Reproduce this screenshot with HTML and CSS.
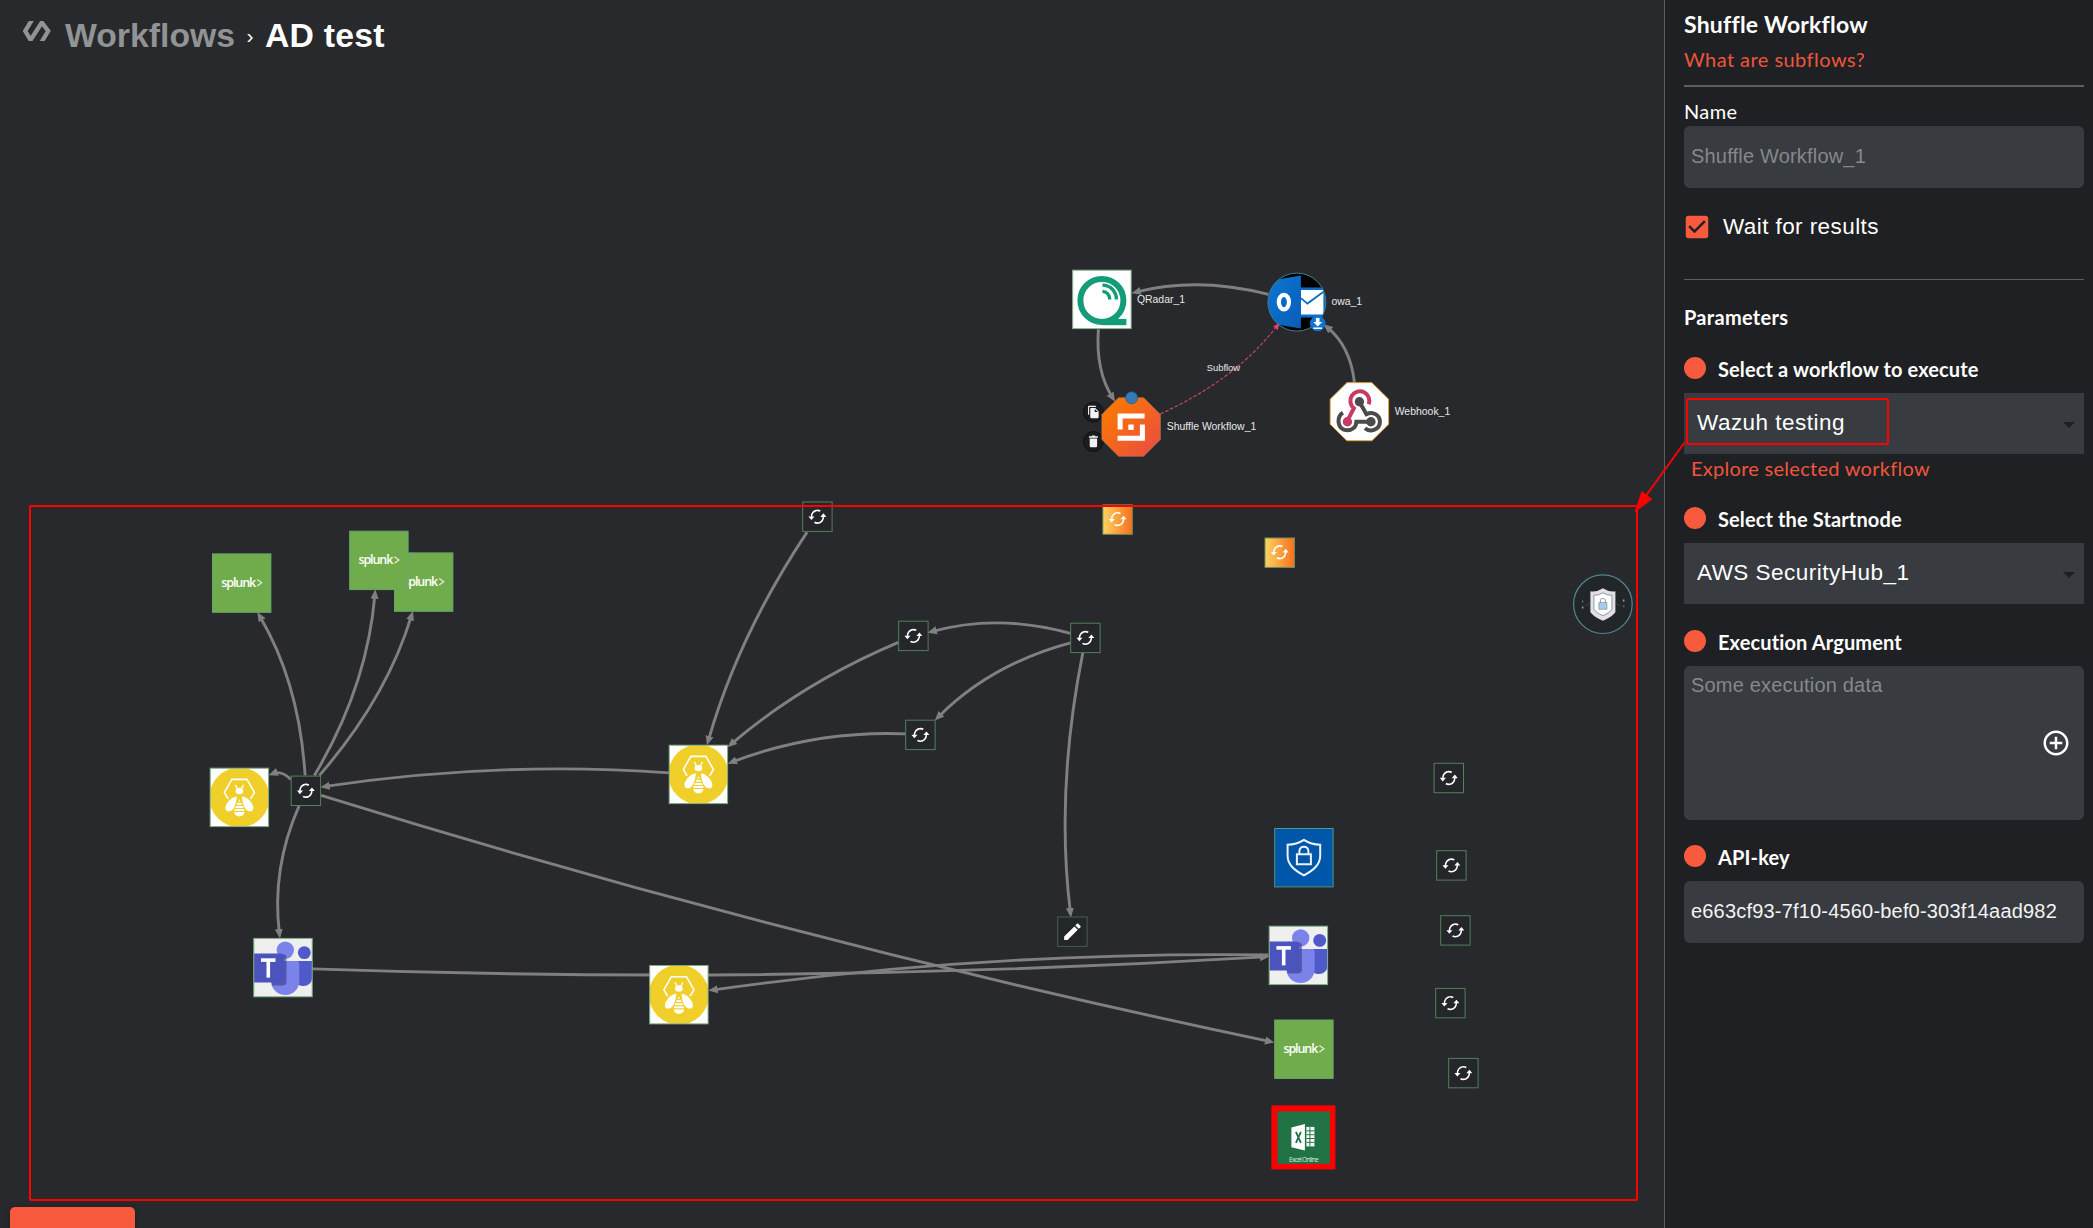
FILE: index.html
```html
<!DOCTYPE html>
<html lang="en">
<head>
<meta charset="utf-8">
<title>AD test</title>
<link rel="stylesheet" href="styles.css">
</head>
<body>
<main class="canvas">
  <header class="crumbs">
    <svg class="logo" width="30" height="20" viewBox="0 0 30 20"><path d="M10.5 -2 3.2 10 8.6 19 19.8 1.5 26.2 10 19 22" fill="none" stroke="#929394" stroke-width="4.300"/></svg>
    <span class="crumb-parent">Workflows</span>
    <span class="crumb-sep">›</span>
    <span class="crumb-current">AD test</span>
  </header>

  <svg class="graph" width="1664" height="1228" viewBox="-.4 -.4 1664 1228">
    <defs>
      <marker id="arrow" viewBox="0 0 8 8" refX="3.7" refY="4" markerWidth="9.500" markerHeight="9.500" markerUnits="userSpaceOnUse" orient="auto"><path d="M0 .6 8 4 0 7.4z" fill="#808080"/></marker>
      <marker id="arrow-sub" viewBox="0 0 8 8" refX="6" refY="4" markerWidth="6.500" markerHeight="6.500" markerUnits="userSpaceOnUse" orient="auto"><path d="M0 .4 8 4 0 7.6z" fill="#e83e72"/></marker>
      <linearGradient id="sub" x1="0" y1="1" x2="1" y2="0"><stop offset="0" stop-color="#c9564a"/><stop offset="1" stop-color="#d83a6e"/></linearGradient>
      <linearGradient id="orange" x1="0" y1="0" x2="1" y2="0"><stop offset="0" stop-color="#fcd360"/><stop offset="1" stop-color="#f8701d"/></linearGradient>
      <linearGradient id="shuffle" x1="0" y1="0" x2="1" y2="1"><stop offset=".15" stop-color="#fb7705"/><stop offset="1" stop-color="#e74a45"/></linearGradient>
      <linearGradient id="owa-blue" x1="0" y1="0" x2="1" y2="1"><stop offset="0" stop-color="#0a78d3"/><stop offset="1" stop-color="#0a5cb8"/></linearGradient>
      <clipPath id="round"><circle r="29"/></clipPath>
      <clipPath id="tile"><rect x="-29" y="-29" width="58" height="58"/></clipPath>

      <g id="cycle" fill="#fff"><g transform="scale(.83 .9) translate(-12 -12)"><path d="M19.3 8.2l-3.8 4h2.7c0 3.2-2.9 5.9-6.2 5.9-1.01 0-1.97-.25-2.8-.7l-1.3 1.5C9.1 19.6 10.43 20 12 20c4.42 0 8-3.58 8-7.8h2.8zM5.8 11.8c0-3.2 2.9-5.9 6.2-5.9 1.01 0 1.97.25 2.8.7l1.3-1.5C14.9 4.4 13.57 4 12 4c-4.42 0-8 3.58-8 7.8H1.2l3.5 4 3.8-4z"/></g></g>
      <g id="repeat"><rect x="-14.7" y="-14.7" width="29.4" height="29.4" fill="#242629" stroke="#54805a"/><use href="#cycle"/></g>
      <g id="repeat-orange"><rect x="-14.7" y="-14.7" width="29.4" height="29.4" fill="url(#orange)" stroke="#6f8f58"/><use href="#cycle" y="-.5"/></g>
      <g id="splunk"><rect x="-29.2" y="-29.2" width="58.4" height="58.4" fill="#70ac4c" stroke="#67a869"/><text class="splunk" x="-20.5" y="3.6" textLength="35">splunk</text><path d="M15.5 -3.6 20 -.4 15.5 2.8" fill="none" stroke="#e4efdc" stroke-width="1.2"/></g>
      <g id="bee">
        <rect x="-29.2" y="-29.2" width="58.4" height="58.4" fill="#fff"/>
        <circle r="30" fill="#f1cf2b" clip-path="url(#tile)"/>
        <rect x="-29.2" y="-29.2" width="58.4" height="58.4" fill="none" stroke="#7bab80"/>
        <path d="M-11.3 1.5-15-5-7.5-18H7.5L15-5 11.3 1.5" fill="none" stroke="#fff" stroke-width="1.6"/>
        <path d="M-4-12.5-2-8.5M4-12.5 2-8.5" stroke="#fff" stroke-width="1.3"/>
        <ellipse cy="-6.3" rx="3.8" ry="3.2" fill="#fff"/>
        <path d="M-2.5-1C-8-1-14 6-14 10.500-14 13.500-11.500 14.600-9 13.500-5 12-3.500 7-2.500-1zM2.500-1C8-1 14 6 14 10.500 14 13.500 11.500 14.600 9 13.500 5 12 3.500 7 2.500-1z" fill="#fff"/>
        <path d="M0 1.500 1 4H-1zM-2 5.300H2L2.600 7.300H-2.600zM-3.600 8.500H3.600L4.300 10.500H-4.300zM-4.800 11.700H4.800L5.100 13.500H-5.100zM-5.100 14.700H5.100C5 17.500 2.500 19-0 19S-5 17.500-5.100 14.700z" fill="#fff"/>
      </g>
      <g id="teams">
        <rect x="-29.2" y="-29.2" width="58.4" height="58.4" fill="#efefef"/>
        <circle cx="21.300" cy="-15" r="6.400" fill="#5059c9"/>
        <path d="M12-6.500H29V11C29 15 25 18.500 20.500 18.500 17 18.500 13 17 12 14z" fill="#5059c9"/>
        <circle cx="2.300" cy="-17.500" r="8.700" fill="#7b83eb"/>
        <path d="M-12-6.500H14Q16.300-6.500 16.300-4V13.500C16.300 21.500 10 27.500 2.300 27.500S-12 21.500-12 13.500z" fill="#7b83eb"/>
        <path d="M-13-13.500H0Q3.500-13 3.500-10V14Q3.500 18-.5 18H-11z" fill="#3b3f8a" opacity=".65"/>
        <path d="M-29-14H-2.500Q1-14 1-10.500V11.500Q1 15-2.500 15H-29z" fill="#4b53bc"/>
        <path d="M-22-7.500H-7.500" stroke="#fff" stroke-width="3.600"/><path d="M-14.700-7V10" stroke="#fff" stroke-width="3.600"/>
        <rect x="-29.2" y="-29.2" width="58.4" height="58.4" fill="none" stroke="#7bb07f"/>
      </g>
    </defs>

    <g class="edges">
      <path d="M1268 294Q1198 276 1136 291.500"/>
      <path d="M1098 329Q1095 370 1112 397"/>
      <path d="M1354 382Q1350 346 1327 327"/>
      <path d="M304.700 775Q299 683 259.500 616"/>
      <path d="M314 775Q367 686 374.500 594"/>
      <path d="M319 775Q386 698 411 615.500"/>
      <path d="M290.500 779Q281 770 273 773"/>
      <path d="M298.700 805.500Q271 868 279 933"/>
      <path d="M320.700 795Q792 941 1269 1041"/>
      <path d="M668.500 772.500Q500 760 325 786"/>
      <path d="M806.700 531.700Q738 635 708 740"/>
      <path d="M898 642Q803 682 731 743.500"/>
      <path d="M905 733.500Q815 730 732 761.500"/>
      <path d="M1070 633Q998 613 932 631"/>
      <path d="M1070 642.500Q990 664 938 716.500"/>
      <path d="M1082.400 652.500Q1055 790 1070 912"/>
      <path d="M312 968.500Q790 985 1264 956.500"/>
      <path d="M1268 954.500Q985 951 713 989.500"/>
    </g>
    <path d="M1160 413.500Q1236 379 1278 324" class="subflow-edge"/>

    <g class="tags">
      <text x="1136.500" y="302.300">QRadar_1</text>
      <text x="1331" y="305">owa_1</text>
      <text x="1394.300" y="414.500">Webhook_1</text>
      <text x="1166.300" y="429.700">Shuffle Workflow_1</text>
      <text class="tag-small" x="1206.300" y="370.300">Subflow</text>
    </g>

    <!-- QRadar -->
    <g transform="translate(1101.500 299)">
      <rect x="-29.200" y="-29.200" width="58.400" height="58.400" fill="#fff" stroke="#8fb58f"/>
      <path d="M0 19.500H24.500V25.800H0z" fill="#139c77"/>
      <circle cy="1" r="21.500" fill="#fff" stroke="#139c77" stroke-width="6"/>
      <path d="M.5-14.300C8.500-14.300 14.500-8 14.500 0M.5-8C4.500-8 7.800-4.500 7.800 0" fill="none" stroke="#139c77" stroke-width="3.400"/>
    </g>

    <!-- Outlook -->
    <g transform="translate(1296.500 301.700)">
      <g clip-path="url(#round)">
        <circle r="29" fill="#000"/>
        <path d="M3-14.500H29V15.500H3z" fill="#0a6cc8"/>
        <path d="M4-12H26.500V12.500H4z" fill="#fff"/>
        <path d="M4-4 10.500 1.500 27-10.500" fill="none" stroke="#0a6cc8" stroke-width="1.800"/>
        <path d="M-29-21 4-26.500V26.500L-29 21z" fill="url(#owa-blue)"/>
        <ellipse cx="-13" cy="0" rx="5.100" ry="7.300" fill="none" stroke="#fff" stroke-width="4.200"/>
      </g>
      <circle r="29" fill="none" stroke="#3f7f8c"/>
      <circle cx="20.800" cy="21.300" r="7.800" fill="#1173cf"/>
      <path d="M19 16H22.600V20H25.300L20.800 24.500 16.300 20H19zM16.500 25.500H25.100V27H16.500z" fill="#fff"/>
    </g>

    <!-- Webhook -->
    <g transform="translate(1359 411.300)">
      <path d="M-12.500-29H12.500L29.200-12.500V12.500L12.500 29H-12.500L-29.200 12.500V-12.500z" fill="#fff" stroke="#e8a33a"/>
      <g fill="none" stroke-width="4">
        <path d="M9.300-7.500A9.500 9.500 0 1 0-5.500-3.500L-12 9" stroke="#c73a63"/>
        <path d="M0-10 7 2.500C14-1 20.500 4 20.500 10 20.500 18 11 21 5.500 16.500" stroke="#4b4b4b"/>
        <path d="M-16.500 1C-23 5-22 15-15.500 18-8 20.500-3 15-3 10H11" stroke="#4b4b4b"/>
      </g>
      <circle cy="-10" r="4.700" fill="#4b4b4b"/><circle cx="-12" cy="10" r="4.700" fill="#c73a63"/><circle cx="11.500" cy="10" r="4.700" fill="#4b4b4b"/>
    </g>

    <!-- Shuffle workflow with its node controls -->
    <g transform="translate(1130.700 426.600)">
      <g transform="translate(-37.700 -14.900)"><circle r="10" fill="#1b1c1f" stroke="#101113"/><g transform="translate(-6.500 -6.800) scale(.56)" fill="#f2f2f2"><path d="M16 1H4c-1.100 0-2 .9-2 2v14h2V3h12V1zm-1 4l6 6v10c0 1.100-.9 2-2 2H7.990C6.890 23 6 22.100 6 21l.01-14c0-1.100.89-2 1.990-2h7zm-1 7h5.500L14 6.500V12z"/></g></g>
      <g transform="translate(-37.700 14.600)"><circle r="10" fill="#1b1c1f" stroke="#101113"/><path d="M-3.700-3H3.700V4.500Q3.700 5.700 2.500 5.700H-2.500Q-3.700 5.700-3.700 4.500zM-4.500-5.300H-2L-1.300-6H1.300L2-5.300H4.500V-3.900H-4.500z" fill="#f2f2f2"/></g>
      <path d="M-12.500-29.200H12.500L29.200-12.500V12.500L12.500 29.200H-12.500L-29.200 12.500V-12.500z" fill="url(#shuffle)" stroke="#b77a55" stroke-width=".7"/>
      <path d="M13.500-11H-11V2.500M11.300-2.500V11.200H-13.500" fill="none" stroke="#fff" stroke-width="5"/>
      <rect x="-2.800" y="-2.500" width="5.400" height="5.400" fill="#fff"/>
      <circle cx=".5" cy="-29.200" r="6" fill="#337ab7" stroke="#1d5f93" stroke-width=".8"/>
    </g>

    <!-- Subflow nodes -->
    <use href="#splunk" x="241.300" y="582.700"/>
    <use href="#splunk" x="423.300" y="581.700"/>
    <use href="#splunk" x="378.500" y="560"/>
    <use href="#splunk" x="1303.500" y="1048.800"/>
    <use href="#bee" x="239" y="797"/>
    <use href="#bee" x="698" y="774"/>
    <use href="#bee" x="678.500" y="994.300"/>
    <use href="#teams" x="282.600" y="967.200"/>
    <use href="#teams" x="1298" y="955"/>
    <use href="#repeat" x="305.500" y="790.400"/>
    <use href="#repeat" x="817" y="516.300"/>
    <use href="#repeat" x="913" y="635.500"/>
    <use href="#repeat" x="1085" y="637.500"/>
    <use href="#repeat" x="920" y="734.500"/>
    <use href="#repeat" x="1448.400" y="777.600"/>
    <use href="#repeat" x="1451" y="865"/>
    <use href="#repeat" x="1455" y="930"/>
    <use href="#repeat" x="1450" y="1002.700"/>
    <use href="#repeat" x="1463" y="1072.700"/>
    <use href="#repeat-orange" x="1117.200" y="519.200"/>
    <use href="#repeat-orange" x="1279.300" y="552.300"/>

    <!-- Edit tool -->
    <g transform="translate(1072 931.300)">
      <rect x="-14.700" y="-14.700" width="29.400" height="29.400" fill="#242629" stroke="#42604a"/>
      <g transform="translate(-11 -11) scale(.92)" fill="#fff"><path d="M3 17.250V21h3.750L17.810 9.940l-3.750-3.750L3 17.250zM20.710 7.040c.39-.39.39-1.020 0-1.410l-2.340-2.340c-.39-.39-1.020-.39-1.410 0l-1.830 1.830 3.750 3.750 1.830-1.830z"/></g>
    </g>

    <!-- Defender -->
    <g transform="translate(1303.500 857.300)">
      <rect x="-29.200" y="-29.200" width="58.400" height="58.400" fill="#0056a8" stroke="#4f9a80"/>
      <path d="M-16.300-13C-10-13-5-14.500 0-17.800 5-14.500 10-13 16.300-13V-2C16.300 7 9.500 12.500 0 17.700-9.500 12.500-16.300 7-16.300-2z" fill="none" stroke="#edf2f7" stroke-width="2"/>
      <path d="M-7-3.500H7V6.500H-7zM-4.500-3.500V-6.500C-4.500-12.500 4.500-12.500 4.500-6.500V-3.500" fill="none" stroke="#edf2f7" stroke-width="2"/>
    </g>

    <!-- Security hub -->
    <g transform="translate(1602.500 603.800)">
      <circle r="29.300" fill="#232629" stroke="#4f8790" stroke-width="1.200"/>
      <path d="M-12.500-13Q-6-12 0-16 6-12 12.500-13V8Q8 13.500 0 16.500-8 13.500-12.500 8z" fill="#dfe1e6"/>
      <path d="M-9-9Q-4-8.500 0-11.500 4-8.500 9-9V5.500Q6 9 0 11.500-6 9-9 5.500z" fill="#fff" stroke="#8b8d92" stroke-width=".9"/>
      <rect x="-4" y="-1.500" width="8" height="6.500" fill="#a5cdf0" stroke="#7d92a5" stroke-width=".7"/>
      <path d="M-2.500-1.500V-3.500C-2.500-6.500 2.500-6.500 2.500-3.500V-1.500" fill="none" stroke="#85909c" stroke-width="1"/>
      <path d="M-21-2.700H-19.500M20 2H21.500" stroke="#5365a0" stroke-width="2"/><path d="M-21 3.300H-19.500M20-3.800H21.500" stroke="#a0a0a2" stroke-width="2"/>
      <path d="M-18 1H-15L-13-2M18 1H15L13-2" fill="none" stroke="#3c3e42"/>
    </g>

    <!-- Excel -->
    <g transform="translate(1303 1137)">
      <rect x="-32" y="-32" width="64" height="64" fill="#f00"/>
      <rect x="-26" y="-26" width="52.500" height="52.500" fill="#217346"/>
      <path d="M3-10.500H11V9H3z" fill="#fff"/>
      <path d="M3-6.500H11M3-2.700H11M3 1.100H11M3 4.900H11M6.500-10.500V9" stroke="#217346" stroke-width="1"/>
      <path d="M-12-10 1.500-13.500V13L-12 9.800z" fill="#fff"/>
      <path d="M-7.500-5.500-2.500 5.500M-2.500-5.500-7.500 5.500" stroke="#217346" stroke-width="1.800"/>
      <text class="excel" x="-14.300" y="24.300" textLength="29.500">Excel Online</text>
    </g>
  </svg>

  <button class="action" aria-label="Run"></button>
</main>

<aside class="panel">
  <h1 class="title">Shuffle Workflow</h1>
  <a class="link help">What are subflows?</a>
  <hr class="rule rule-thick">
  <div class="label">Name</div>
  <div class="field muted">Shuffle Workflow_1</div>
  <div class="check">
    <svg width="30" height="30" viewBox="0 0 24 24"><path fill="#f85a3e" d="M19 3H5c-1.110 0-2 .9-2 2v14c0 1.100.89 2 2 2h14c1.110 0 2-.9 2-2V5c0-1.100-.89-2-2-2zm-9 14l-5-5 1.410-1.410L10 14.170l7.590-7.590L19 8l-9 9z"/></svg>
    <span>Wait for results</span>
  </div>
  <hr class="rule">
  <h2 class="section">Parameters</h2>

  <div class="param"><i class="dot"></i><b>Select a workflow to execute</b></div>
  <div class="select">Wazuh testing<i class="caret"></i></div>
  <a class="link explore">Explore selected workflow</a>

  <div class="param"><i class="dot"></i><b>Select the Startnode</b></div>
  <div class="select">AWS SecurityHub_1<i class="caret"></i></div>

  <div class="param param-arg"><i class="dot"></i><b>Execution Argument</b></div>
  <div class="field area muted">
    <span>Some execution data</span>
    <svg width="30" height="30" viewBox="0 0 24 24"><path fill="#fff" d="M13 7h-2v4H7v2h4v4h2v-4h4v-2h-4V7zm-1-5C6.480 2 2 6.480 2 12s4.480 10 10 10 10-4.480 10-10S17.520 2 12 2zm0 18c-4.410 0-8-3.590-8-8s3.590-8 8-8 8 3.590 8 8-3.590 8-8 8z"/></svg>
  </div>

  <div class="param param-key"><i class="dot"></i><b>API-key</b></div>
  <div class="field key">e663cf93-7f10-4560-bef0-303f14aad982</div>
</aside>

<svg class="annotations" width="2093" height="1228" viewBox="0 0 2093 1228">
  <g fill="none" stroke="#f00" stroke-width="2">
    <rect x="30" y="506" width="1607" height="694" rx="1"/>
    <rect x="1687" y="399" width="201" height="45" rx="1"/>
    <path d="M1684.500 442.500 1645 497"/>
  </g>
  <path d="M1634.500 512.500 1641.500 491 1652.300 499.300z" fill="#f00"/>
</svg>
</body>
</html>
```
FILE: styles.css
```css
* { box-sizing: border-box; }

body {
  margin: 0;
  display: flex;
  width: 2093px;
  height: 1228px;
  overflow: hidden;
  position: relative;
  background: #27292d;
  color: #fff;
  font-family: "Liberation Sans", Arial, sans-serif;
}

/* Workflow canvas */
.canvas {
  position: relative;
  flex: 1;
  height: 1228px;
  overflow: hidden;
}

.crumbs {
  display: flex;
  align-items: baseline;
  padding: 15px 0 0 22px;
  height: 60px;
  font-size: 33.750px;
  line-height: 40px;
  font-weight: 700;
  white-space: nowrap;
}
.logo { align-self: flex-start; margin-top: 6px; }
.crumb-parent { margin-left: 13px; color: #929394; }
.crumb-sep { position: relative; top: -4px; width: 30px; text-align: center; font-size: 21px; font-weight: 400; }
.crumb-current { letter-spacing: .2px; }

.graph { position: absolute; left: 0; top: 0; }
.edges path { fill: none; stroke: #808080; stroke-width: 2.900; marker-end: url(#arrow); }
.subflow-edge { fill: none; stroke: url(#sub); stroke-width: 1.100; stroke-dasharray: 3.500 1.800; marker-end: url(#arrow-sub); }
.tags text { font-size: 10.450px; fill: #e8e8e8; }
.tags .tag-small { font-size: 9.400px; }
.splunk { font: 600 12.500px "Open Sans", sans-serif; fill: #fff; }
.excel { font: 6.500px "Open Sans", sans-serif; fill: #dfeae3; }

.action {
  position: absolute;
  left: 10px;
  top: 1207px;
  width: 125px;
  height: 46px;
  border: 0;
  border-radius: 5px;
  background: #f85a3e;
  box-shadow: 0 1px 6px rgba(0, 0, 0, .25);
}

/* Side panel */
.panel {
  width: 429px;
  display: flex;
  flex-direction: column;
  padding: 0 9px 0 19px;
  border-left: 1px solid #5c5f62;
  background: #1f2023;
  white-space: nowrap;
}
.title, .link, .label, .section, .param b { font-family: Lato, sans-serif; margin: 0; }
.title { height: 47px; padding-top: 8px; font-size: 23px; line-height: 32px; font-weight: 700; letter-spacing: .2px; }
.link { color: #ef553b; font-size: 20px; line-height: 24px; }
.help { height: 38px; letter-spacing: .45px; }
.rule { flex: none; width: 100%; height: 1px; margin: 0; border: 0; background: #5c6063; }
.rule-thick { height: 2px; }
.label { height: 39px; padding-top: 12px; font-size: 20px; line-height: 24px; letter-spacing: .4px; }
.field {
  flex: none;
  height: 62px;
  padding-left: 7px;
  border-radius: 6px;
  background: #383b40;
  font-size: 20px;
  line-height: 61px;
  letter-spacing: .00938em;
}
.muted { color: #86888b; }
.check { display: flex; align-items: center; height: 91px; padding: 0 0 13px; margin-left: -2px; gap: 11px; font-size: 22.500px; letter-spacing: .42px; }
.section { height: 76px; padding-top: 25px; font-size: 20px; line-height: 24px; letter-spacing: .3px; }
.param { display: flex; flex: none; height: 37px; gap: 12px; }
.param b { padding-top: 1px; font-size: 20px; line-height: 24px; letter-spacing: .12px; }
.dot { flex: none; width: 22px; height: 22px; border-radius: 50%; background: #f85a3e; margin-top: 1px; }
.select {
  flex: none;
  display: flex;
  justify-content: space-between;
  align-items: center;
  height: 61px;
  padding: 0 9px 2px 13px;
  background: #383b40;
  font-size: 22.500px;
  letter-spacing: .48px;
}
.caret { margin-top: 5px; border: 6px solid transparent; border-top-color: #1d1f22; border-bottom: 0; }
.explore { height: 52px; padding: 2px 0 0 7px; letter-spacing: .28px; }
.param-arg { margin-top: 25px; }
.area { display: flex; justify-content: space-between; align-items: flex-start; height: 154px; padding-right: 13px; }
.area span { line-height: 38px; }
.area svg { align-self: center; }
.param-key { margin-top: 24px; }
.key { color: #f3f3f3; }

.annotations { position: absolute; left: 0; top: 0; pointer-events: none; }
```
